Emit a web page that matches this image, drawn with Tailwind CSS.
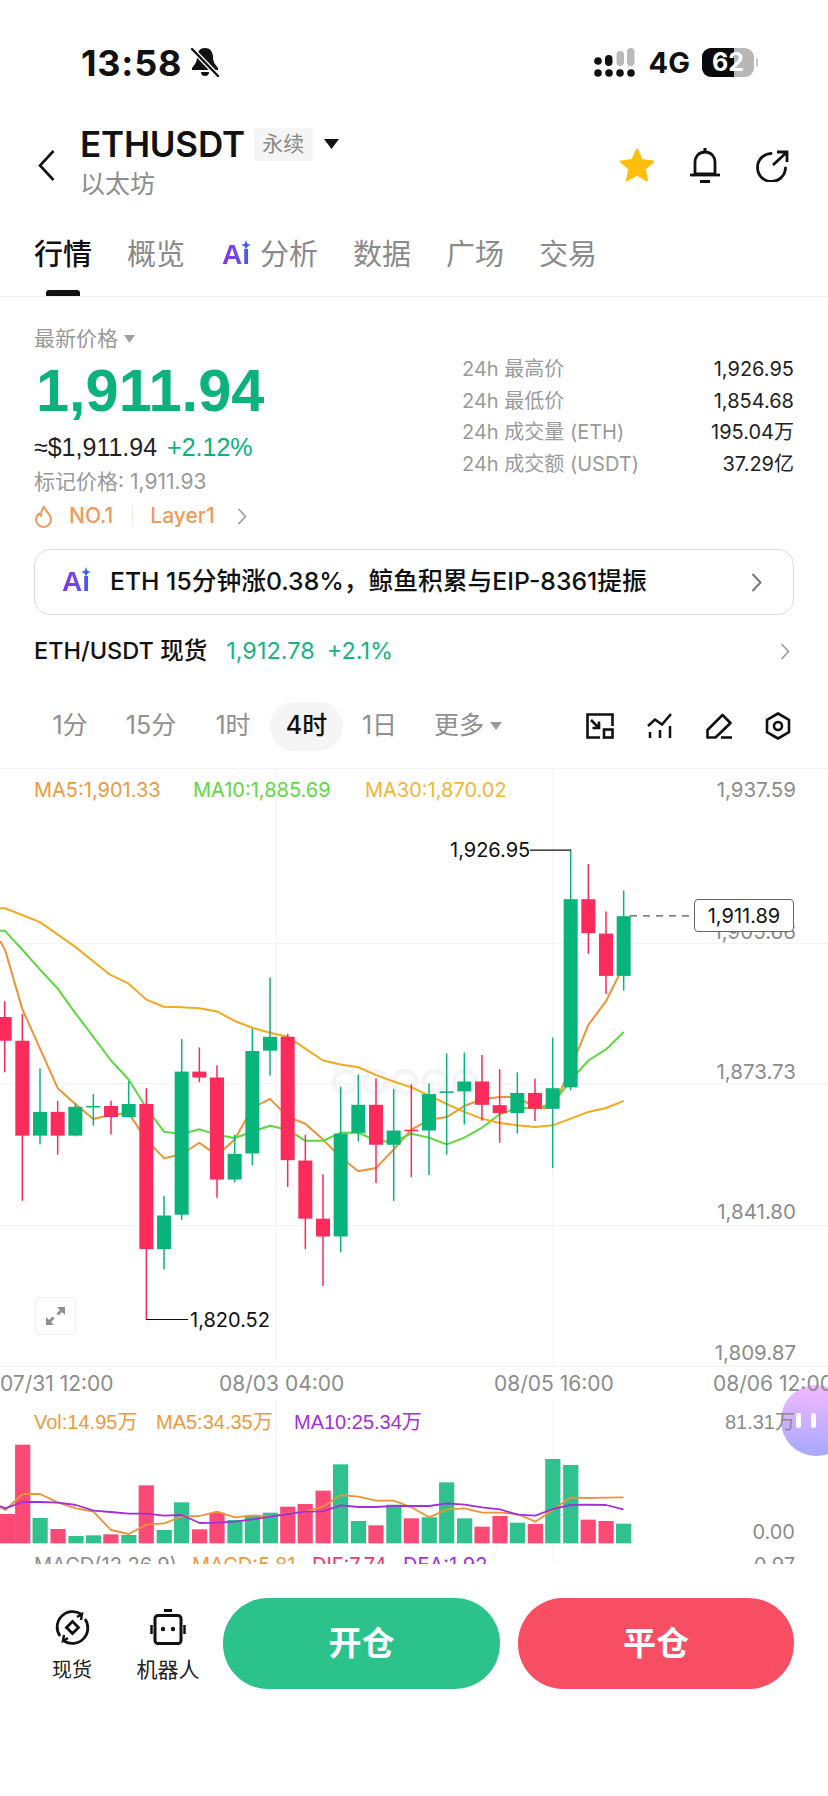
<!DOCTYPE html>
<html lang="zh">
<head>
    <meta charset="UTF-8">
    <meta name="viewport" content="width=device-width, initial-scale=1.0">
    <title>ETHUSDT</title>
    <script src="https://cdn.jsdelivr.net/npm/@tailwindcss/browser@4"></script>
</head>
<body class="bg-white text-[#111] antialiased font-['Inter','Noto_Sans_CJK_SC',sans-serif]">
<div class="w-[828px] h-[1796px] overflow-hidden flex flex-col">

    <!-- Status bar -->
    <div class="h-[100px] shrink-0 pt-[25px] pl-[81px] pr-[70px] flex items-center justify-between">
        <div class="flex items-center gap-[8px]">
            <span class="text-[36px] font-bold tracking-[0.8px] leading-none">13:58</span>
            <svg width="30" height="31" viewBox="0 0 30 31">
                <path d="M15 1c-6 0-8 5-8 9 0 6-3 8-5 11v2h26v-2c-2-3-5-5-5-11 0-4-2-9-8-9z" fill="#111"/>
                <path d="M11 25h8a4 4 0 0 1-8 0z" fill="#111"/>
                <path d="M1 1l28 29" stroke="#fff" stroke-width="5"/>
                <path d="M2 2l26 27" stroke="#111" stroke-width="2.4" stroke-linecap="round"/>
            </svg>
        </div>
        <div class="flex items-center">
            <svg width="42" height="30" viewBox="0 0 42 30">
                <circle cx="4" cy="25" r="3.8" fill="#111"/><circle cx="15" cy="25" r="3.8" fill="#111"/><circle cx="26" cy="25" r="3.8" fill="#111"/><circle cx="37" cy="25" r="3.8" fill="#111"/>
                <circle cx="4" cy="13" r="3.8" fill="#111"/>
                <rect x="11" y="7" width="7.5" height="11" rx="3.7" fill="#111"/>
                <rect x="22.5" y="3" width="7.5" height="15" rx="3.7" fill="#b9b9b9"/>
                <rect x="33" y="0" width="7.5" height="18" rx="3.7" fill="#b9b9b9"/>
            </svg>
            <span class="ml-[13px] text-[29px] font-bold leading-none">4G</span>
            <div class="ml-[12px] w-[52px] h-[29px] rounded-[9px] bg-[#b7b7b7] overflow-hidden relative flex items-center justify-center">
                <div class="absolute left-0 top-0 bottom-0 w-[32px] bg-[#0a0a0a]"></div>
                <span class="relative text-white text-[25px] font-bold leading-none">62</span>
            </div>
            <div class="ml-[2px] w-[2px] h-[9px] rounded-r bg-[#c8c8c8]"></div>
        </div>
    </div>

    <!-- Header -->
    <div class="h-[112px] shrink-0 flex items-start relative">
        <svg class="ml-[38px] mt-[50px]" width="17" height="31" viewBox="0 0 17 31" fill="none"><path d="M15.5 1L2 15.5 15.5 30" stroke="#111" stroke-width="2.6"/></svg>
        <div class="ml-[25px] mt-[26px]">
            <div class="flex items-center h-[36px]">
                <span class="text-[35px] font-semibold leading-none tracking-[-0.2px]">ETHUSDT</span>
                <span class="ml-[9px] w-[59px] h-[33px] bg-[#f5f5f5] rounded-[3px] flex items-center justify-center text-[21px] text-[#8a8a8a]">永续</span>
                <svg class="ml-[11px]" width="15" height="10" viewBox="0 0 15 10"><path d="M0 0h15L7.5 10z" fill="#111"/></svg>
            </div>
            <p class="mt-[6px] text-[25px] leading-[32px] text-[#8c8c8c]">以太坊</p>
        </div>
        <div class="ml-auto mt-[47px] pr-[39px] flex items-center">
            <svg width="36" height="35" viewBox="0 0 36 35"><path d="M18 1.5l4.8 10.6 11.4 1.3-8.5 7.7 2.4 11.3L18 26.7 7.9 32.4l2.4-11.3-8.5-7.7 11.4-1.3z" fill="#ffbe0b" stroke="#ffbe0b" stroke-width="2" stroke-linejoin="round"/></svg>
            <svg class="ml-[34px]" width="32" height="37" viewBox="0 0 32 37" fill="none"><path d="M16 5C9.5 5 6 10 6 15v12H26V15c0-5-3.500-10-10-10z" stroke="#111" stroke-width="2.8"/><path d="M1 28H31" stroke="#111" stroke-width="2.8"/><path d="M16 1v4" stroke="#111" stroke-width="3"/><path d="M11 34.500h10" stroke="#111" stroke-width="3"/></svg>
            <svg class="ml-[35px]" width="33" height="32" viewBox="0 0 33 32" fill="none"><path d="M15 3.500A14 14 0 1 0 29.500 18" stroke="#111" stroke-width="2.8" stroke-linecap="round"/><path d="M17 15L31 2M21 2h10v10" stroke="#111" stroke-width="2.8"/></svg>
        </div>
    </div>

    <!-- Tabs -->
    <div class="h-[85px] shrink-0 border-b border-[#ededed] relative flex items-start pl-[34px] pt-[24px] gap-[35px] text-[29px] leading-[38px] text-[#8a8a8a]">
        <span class="text-[#111] font-medium">行情</span>
        <span>概览</span>
        <span class="flex items-center gap-[11px] ml-[2px]">
            <span class="relative w-[27px] text-[28px] font-bold leading-[38px] font-['Liberation_Sans'] bg-linear-to-r from-[#8a2de2] to-[#3f5cf0] bg-clip-text text-transparent">Ai</span>
            <svg class="-ml-[19px] -mt-[20px] -mr-[2px]" width="10" height="10" viewBox="0 0 10 10"><path d="M5 0l1.300 3.700L10 5 6.300 6.300 5 10 3.700 6.300 0 5l3.700-1.300z" fill="#2f6cf6"/></svg>
            <span>分析</span>
        </span>
        <span>数据</span>
        <span>广场</span>
        <span>交易</span>
        <div class="absolute left-[46px] bottom-0 w-[34px] h-[6px] rounded-t-[3px] bg-[#111]"></div>
    </div>

    <!-- Price block -->
    <div class="h-[237px] shrink-0 px-[34px] flex justify-between">
        <div>
            <div class="h-[25px] mt-[29px] flex items-center gap-[6px] text-[21px] text-[#999]">
                <span>最新价格</span>
                <svg width="11" height="8" viewBox="0 0 11 8"><path d="M0 0h11L5.500 8z" fill="#a0a0a0"/></svg>
            </div>
            <div class="h-[79px] flex items-center text-[59.5px] font-bold leading-none text-[#0bb27c] ml-[2px] font-['Liberation_Sans']">1,911.94</div>
            <div class="h-[36px] flex items-center text-[25px] font-['Liberation_Sans']">
                <span class="text-[#222]">≈$1,911.94</span>
                <span class="ml-[10px] text-[#0bb27c]">+2.12%</span>
            </div>
            <div class="h-[32px] flex items-center text-[21px] text-[#999]">标记价格: 1,911.93</div>
            <div class="h-[36px] flex items-center text-[21px] text-[#ef9a5b]">
                <svg width="19" height="23" viewBox="0 0 19 23" fill="none"><path d="M10 1.500c1 5 7 7 7 13a7.500 7.500 0 0 1-15 0c0-3 1.500-4.500 3-6 .5 1.500 1 2 2 2.500 0-4 1-7 3-9.500z" stroke="#ef9a5b" stroke-width="2" stroke-linejoin="round"/></svg>
                <span class="ml-[16px] font-medium">NO.1</span>
                <span class="ml-[19px] w-px h-[20px] bg-[#f3e8dd]"></span>
                <span class="ml-[17px] font-medium">Layer1</span>
                <svg class="ml-[22px]" width="10" height="17" viewBox="0 0 10 17" fill="none"><path d="M1.500 1l7 7.500-7 7.500" stroke="#999" stroke-width="1.600"/></svg>
            </div>
        </div>
        <div class="w-[332px] mt-[57px] text-[20px] leading-[31.5px] text-[#9a9a9a]">
            <div class="flex justify-between"><span>24h 最高价</span><span class="text-[#222]">1,926.95</span></div>
            <div class="flex justify-between"><span>24h 最低价</span><span class="text-[#222]">1,854.68</span></div>
            <div class="flex justify-between"><span>24h 成交量 (ETH)</span><span class="text-[#222]">195.04万</span></div>
            <div class="flex justify-between"><span>24h 成交额 (USDT)</span><span class="text-[#222]">37.29亿</span></div>
        </div>
    </div>

    <!-- AI insight -->
    <div class="h-[66px] shrink-0 mx-[34px] mt-[15px] border border-[#dcdce6] rounded-[16px] flex items-center pl-[27px] pr-[31px]">
        <span class="relative w-[27px] text-[28px] font-bold font-['Liberation_Sans'] bg-linear-to-r from-[#8a2de2] to-[#3f5cf0] bg-clip-text text-transparent">Ai</span>
        <svg class="-ml-[8px] -mt-[21px]" width="10" height="10" viewBox="0 0 10 10"><path d="M5 0l1.300 3.700L10 5 6.300 6.300 5 10 3.700 6.300 0 5l3.700-1.300z" fill="#2f6cf6"/></svg>
        <span class="ml-[19px] text-[24.75px] font-medium text-[#111] whitespace-nowrap">ETH 15分钟涨0.38%，鲸鱼积累与EIP-8361提振</span>
        <svg class="ml-auto" width="11" height="19" viewBox="0 0 11 19" fill="none"><path d="M1.500 1l8 8.500-8 8.500" stroke="#777" stroke-width="2"/></svg>
    </div>

    <!-- Spot row -->
    <div class="h-[70px] shrink-0 mx-[34px] pt-[2px] flex items-center text-[23.5px]">
        <span class="font-medium text-[#111]">ETH/USDT 现货</span>
        <span class="ml-[19px] text-[#16b482]">1,912.78</span>
        <span class="ml-[12px] text-[#16b482]">+2.1%</span>
        <svg class="ml-auto mr-[4px]" width="10" height="17" viewBox="0 0 10 17" fill="none"><path d="M1.500 1l7 7.500-7 7.500" stroke="#999" stroke-width="1.600"/></svg>
    </div>

    <!-- Timeframes -->
    <div class="h-[80px] shrink-0 pl-[34px] pt-[2px] flex items-center text-[25px] text-[#8f8f8f]">
        <span class="w-[72px] text-center">1分</span>
        <span class="w-[90px] text-center">15分</span>
        <span class="w-[74px] text-center">1时</span>
        <span class="w-[73px] h-[49px] rounded-full bg-[#f5f5f5] flex items-center justify-center font-medium text-[#111]">4时</span>
        <span class="w-[73px] text-center">1日</span>
        <span class="ml-[18px]">更多</span>
        <svg class="ml-[6px]" width="12" height="8" viewBox="0 0 12 8"><path d="M0 0h12L6 8z" fill="#9a9a9a"/></svg>
        <svg class="ml-[84px]" width="28" height="26" viewBox="0 0 28 26" fill="none" stroke="#111" stroke-width="2.600"><path d="M14 24.500H1.500V1.500H26.500V13"/><rect x="18" y="16.500" width="8.500" height="8"/><path d="M5 7l8 8M13 8.500V15H6.500"/></svg>
        <svg class="ml-[33px]" width="25" height="26" viewBox="0 0 25 26" fill="none" stroke="#111" stroke-width="2.500"><path d="M1 13l7-6.500 7 5L24 1"/><path d="M3 19v6M13 17v8M23 13v12"/></svg>
        <svg class="ml-[34px]" width="26" height="26" viewBox="0 0 26 26" fill="none" stroke="#111" stroke-width="2.600" stroke-linejoin="round"><path d="M1.500 17L16.500 2l8 8-15 14.500H1.500z"/><path d="M15 24.500h11"/></svg>
        <svg class="ml-[33px]" width="26" height="28" viewBox="0 0 26 28" fill="none" stroke="#111" stroke-width="2.600" stroke-linejoin="round"><path d="M13 1.500l11 6.300v12.400l-11 6.300-11-6.300V7.800z"/><circle cx="13" cy="14" r="4"/></svg>
    </div>

    <!-- Chart -->
    <div class="h-[799px] shrink-0 relative overflow-hidden text-[20px] leading-none whitespace-nowrap">
        <svg id="chart" class="block" width="828" height="799" viewBox="0 0 828 799"></svg>

        <!-- floating assistant -->
        <div class="absolute left-[781px] top-[620px] w-[70px] h-[71px] rounded-[35px] bg-linear-to-b from-[#f2b8ff] to-[#a6a8ff] flex items-center pl-[15px] gap-[10px]">
            <div class="w-[5px] h-[15px] rounded-full bg-white"></div>
            <div class="w-[5px] h-[15px] rounded-full bg-white"></div>
        </div>

        <span class="absolute left-[34px] top-[15px] text-[#ec9a3d]">MA5:1,901.33</span>
        <span class="absolute left-[193px] top-[15px] text-[#5ed83f]">MA10:1,885.69</span>
        <span class="absolute left-[365px] top-[15px] text-[#f2b632]">MA30:1,870.02</span>

        <span class="absolute right-[32px] top-[15px] text-[20.5px] text-[#8c8c8c]">1,937.59</span>
        <span class="absolute right-[32px] top-[157px] text-[20.5px] text-[#8c8c8c]">1,905.66</span>
        <span class="absolute right-[32px] top-[297px] text-[20.5px] text-[#8c8c8c]">1,873.73</span>
        <span class="absolute right-[32px] top-[437px] text-[20.5px] text-[#8c8c8c]">1,841.80</span>
        <span class="absolute right-[32px] top-[578px] text-[20.5px] text-[#8c8c8c]">1,809.87</span>

        <span class="absolute left-[450px] top-[75px] text-[#111]">1,926.95</span>
        <span class="absolute left-[190px] top-[545px] text-[#111]">1,820.52</span>
        <span class="absolute left-[694px] top-[134px] w-[100px] h-[33px] border border-[#666] rounded-[4px] bg-white flex items-center justify-center text-[#111]">1,911.89</span>

        <div class="absolute left-[35px] top-[532px] w-[41px] h-[38px] border border-[#eeeeee] rounded-[4px] bg-white flex items-center justify-center">
            <svg width="21" height="20" viewBox="0 0 21 20"><path d="M12 1h8v8l-3-3-3.500 3.500-2-2L15 4zM1 11v8h8l-3-3 3.500-3.500-2-2L4 14z" fill="#8f8f8f"/></svg>
        </div>

        <span class="absolute left-0 top-[608px] text-[21px] text-[#8c8c8c]">07/31 12:00</span>
        <span class="absolute left-[219px] top-[608px] text-[21px] text-[#8c8c8c]">08/03 04:00</span>
        <span class="absolute left-[494px] top-[608px] text-[21px] text-[#8c8c8c]">08/05 16:00</span>
        <span class="absolute left-[713px] top-[608px] text-[21px] text-[#8c8c8c]">08/06 12:00</span>

        <span class="absolute left-[34px] top-[647px] text-[#ec9a3d] font-['Liberation_Sans','Noto_Sans_CJK_SC',sans-serif]">Vol:14.95万</span>
        <span class="absolute left-[156px] top-[647px] text-[#ec9a3d] font-['Liberation_Sans','Noto_Sans_CJK_SC',sans-serif]">MA5:34.35万</span>
        <span class="absolute left-[294px] top-[647px] text-[#a32fd6] font-['Liberation_Sans','Noto_Sans_CJK_SC',sans-serif]">MA10:25.34万</span>
        <span class="absolute right-[33px] top-[647px] text-[#8c8c8c] font-['Liberation_Sans','Noto_Sans_CJK_SC',sans-serif]">81.31万</span>
        <span class="absolute right-[33px] top-[757px] text-[#8c8c8c]">0.00</span>

        <span class="absolute left-[34px] top-[790px] text-[#8c8c8c]">MACD(12,26,9)</span>
        <span class="absolute left-[192px] top-[790px] text-[#ec9a3d]">MACD:5.81</span>
        <span class="absolute left-[312px] top-[790px] text-[#f0386b]">DIF:7.74</span>
        <span class="absolute left-[403px] top-[790px] text-[#a32fd6]">DEA:1.92</span>
        <span class="absolute right-[33px] top-[790px] text-[#8c8c8c]">0.97</span>
    </div>

    <!-- Bottom actions -->
    <div class="flex-1 bg-white pt-[34px] flex items-start text-[20px] relative">
        <div class="w-[96px] ml-[24px] flex flex-col items-center text-[#222]">
            <svg class="mt-[11px]" width="37" height="37" viewBox="0 0 37 37" fill="none" stroke="#111" stroke-width="2.800">
                <path d="M6 27A15.500 15.500 0 0 1 27 5M31 10A15.500 15.500 0 0 1 10 32"/>
                <path d="M23 8l5-3-1 6M14 29l-5 3 1-6" stroke-width="2.400"/>
                <path d="M18.500 12.500l6 6-6 6-6-6z"/>
            </svg>
            <span class="mt-[11px] leading-[26px]">现货</span>
        </div>
        <div class="w-[96px] flex flex-col items-center text-[#222]">
            <svg class="mt-[11px]" width="36" height="37" viewBox="0 0 36 37" fill="none" stroke="#111" stroke-width="3">
                <path d="M14 1.500h8" stroke-width="3"/>
                <rect x="5" y="6.500" width="26" height="28" rx="3"/>
                <path d="M1.500 16v9M34.500 16v9" stroke-width="2.500"/>
                <circle cx="13" cy="20" r="2.200" fill="#111" stroke="none"/>
                <circle cx="23" cy="20" r="2.200" fill="#111" stroke="none"/>
            </svg>
            <span class="mt-[11px] leading-[26px] text-[21px]">机器人</span>
        </div>
        <div class="ml-[7px] w-[277px] h-[91px] rounded-[45px] bg-[#2cc28b] flex items-center justify-center text-white text-[33px] font-semibold">开仓</div>
        <div class="ml-[18px] w-[276px] h-[91px] rounded-[45px] bg-[#f84e63] flex items-center justify-center text-white text-[33px] font-semibold">平仓</div>
    </div>
</div>

<script>
    // candles: zoomed x, wick top, body top, body bottom, wick bottom, up?
    const RED = '#fb2b5b', GREEN = '#08b47a';
    const candles = [
        [14,610,650,710,790,0],[67,642,710,950,1115,0],[120,780,890,950,972,1],[173,862,890,950,998,0],
        [226,868,877,950,952,1],[280,845,875,878,925,1],[333,862,875,903,947,0],[386,812,870,903,903,1],
        [439,830,870,1237,1415,0],[492,1103,1152,1237,1288,1],[545,706,788,1150,1163,1],[598,727,788,803,815,0],
        [651,772,803,1061,1107,0],[704,948,996,1061,1068,1],[757,680,736,995,1025,1],[810,550,700,735,798,1],
        [863,692,700,1012,1080,0],[916,948,1013,1160,1237,0],[969,1048,1160,1205,1330,0],[1022,826,945,1205,1245,1],
        [1075,795,872,943,965,1],[1128,805,872,973,1070,0],[1181,832,937,973,1115,1],[1234,820,935,938,1055,0],
        [1287,818,845,937,1050,1],[1340,742,838,842,998,1],[1393,740,813,838,922,1],[1446,746,813,872,912,0],
        [1499,782,873,893,968,0],[1552,790,842,893,944,1],[1605,806,842,882,913,0],[1658,702,830,882,1032,1],
        [1712,228,352,828,835,1],[1765,263,352,438,490,0],[1818,383,439,546,592,0],[1871,330,395,546,583,1]
    ];
    const ma30 = [[0,375],[15,375],[120,410],[225,472],[330,543],[385,565],[439,606],[492,624],[545,625],[598,628],[651,636],[704,660],[757,677],[810,690],[863,700],[916,730],[969,760],[1022,770],[1075,777],[1128,797],[1181,813],[1234,828],[1287,848],[1340,870],[1393,890],[1446,907],[1499,918],[1552,924],[1605,928],[1658,924],[1712,907],[1765,890],[1818,880],[1871,862]];
    const ma10 = [[0,432],[15,432],[67,480],[120,530],[173,578],[226,640],[280,700],[333,760],[386,808],[439,880],[492,940],[545,946],[598,934],[651,948],[704,956],[757,940],[810,925],[863,935],[916,963],[969,963],[1022,943],[1075,942],[1128,963],[1181,966],[1234,945],[1287,955],[1340,972],[1393,955],[1446,930],[1499,896],[1552,880],[1605,880],[1658,870],[1712,810],[1765,760],[1818,732],[1871,688]];
    const ma5 = [[0,458],[15,480],[67,630],[120,730],[173,830],[226,870],[280,908],[333,897],[386,893],[439,960],[492,1007],[545,997],[598,968],[651,1000],[704,960],[757,880],[810,857],[863,902],[916,920],[969,960],[1022,1005],[1075,1040],[1128,1032],[1181,985],[1234,935],[1287,910],[1340,903],[1393,875],[1446,858],[1499,852],[1552,852],[1605,880],[1658,880],[1712,780],[1765,670],[1818,610],[1871,520]];

    // volume bars: zoomed x, top, up?
    const vols = [[10,432,0],[43,224,0],[76,444,1],[110,477,0],[144,498,1],[177,496,1],[210,493,0],[244,495,1],[277,346,0],[311,480,1],[344,397,1],[378,478,0],[411,428,0],[445,450,1],[478,436,1],[512,428,1],[545,410,0],[578,402,0],[612,362,0],[645,283,1],[679,453,1],[712,466,0],[746,404,1],[779,445,0],[813,442,1],[846,337,1],[880,445,1],[913,470,0],[947,438,0],[980,458,1],[1014,462,0],[1047,267,1],[1081,285,1],[1114,449,0],[1148,453,0],[1181,461,1]];
    const volMa5 = [[0,412],[10,420],[43,372],[76,372],[110,398],[144,415],[177,425],[210,480],[244,492],[277,464],[311,460],[344,440],[378,438],[411,425],[445,442],[478,436],[512,440],[545,430],[578,425],[612,410],[645,375],[679,380],[712,392],[746,392],[779,412],[813,442],[846,418],[880,415],[913,428],[947,428],[980,432],[1014,455],[1047,420],[1081,382],[1114,384],[1148,383],[1181,382]];
    const volMa10 = [[0,408],[10,415],[43,396],[76,396],[110,398],[144,405],[177,422],[210,426],[244,431],[277,431],[311,437],[344,435],[378,459],[411,458],[445,455],[478,448],[512,440],[545,432],[578,425],[612,424],[645,406],[679,411],[712,411],[746,408],[779,408],[813,408],[846,400],[880,404],[913,412],[947,418],[980,434],[1014,437],[1047,417],[1081,405],[1114,404],[1148,405],[1181,418]];

    const YS = 2.529;
    const cx = x => x / 3, cy = y => y / YS - 5;
    const vx = x => x / 1.894, vy = y => y / 3 + 605;
    let out = '';

    // grid
    [3, 178, 318, 460, 601].forEach(y => out += `<path d="M0 ${y}.5H828" stroke="#f3f3f3" stroke-width="1"/>`);
    [276, 552].forEach(x => out += `<path d="M${x}.5 3V601M${x}.5 635V799" stroke="#f5f5f5" stroke-width="1"/>`);

    // watermark behind the candles
    out += `<g fill="none" stroke="#f5f5f5" stroke-width="5"><circle cx="345" cy="317" r="11"/><circle cx="375" cy="317" r="11"/><circle cx="405" cy="317" r="11"/><circle cx="435" cy="317" r="11"/><circle cx="465" cy="317" r="11"/></g>`;

    const line = (pts, color, fx, fy, w) => `<polyline fill="none" stroke="${color}" stroke-width="${w}" stroke-linejoin="round" points="${pts.map(p => fx(p[0]) + ',' + fy(p[1])).join(' ')}"/>`;

    out += line(ma5, '#ec9438', cx, cy, 2) + line(ma10, '#5ed83f', cx, cy, 2) + line(ma30, '#f0ab1e', cx, cy, 2);
    candles.forEach(([x, wt, bt, bb, wb, up]) => {
        const c = up ? GREEN : RED;
        out += `<rect x="${cx(x) - 0.75}" y="${cy(wt)}" width="1.5" height="${(wb - wt) / YS}" fill="${c}"/>`;
        out += `<rect x="${cx(x) - 7}" y="${cy(bt)}" width="14" height="${Math.max((bb - bt) / YS, 1.5)}" fill="${c}"/>`;
    });

    // high / low / last price markers
    out += `<path d="M530 ${cy(228)}H571" stroke="#111" stroke-width="1.200"/><path d="M146 ${cy(1415)}H188" stroke="#111" stroke-width="1.200"/>`;
    out += `<path d="M630 ${cy(394)}H694" stroke="#555" stroke-width="1.200" stroke-dasharray="7 6"/>`;

    vols.forEach(([x, top, up]) => {
        out += `<rect x="${Math.max(vx(x) - 7.6, 0)}" y="${vy(top)}" width="15.200" height="${(520 - top) / 3}" fill="${up ? '#2fc28e' : '#fb4a75'}"/>`;
    });
    out += line(volMa5, '#ec9438', vx, vy, 1.8) + line(volMa10, '#a32fd6', vx, vy, 1.8);

    document.getElementById('chart').innerHTML = out;
</script>
</body>
</html>
